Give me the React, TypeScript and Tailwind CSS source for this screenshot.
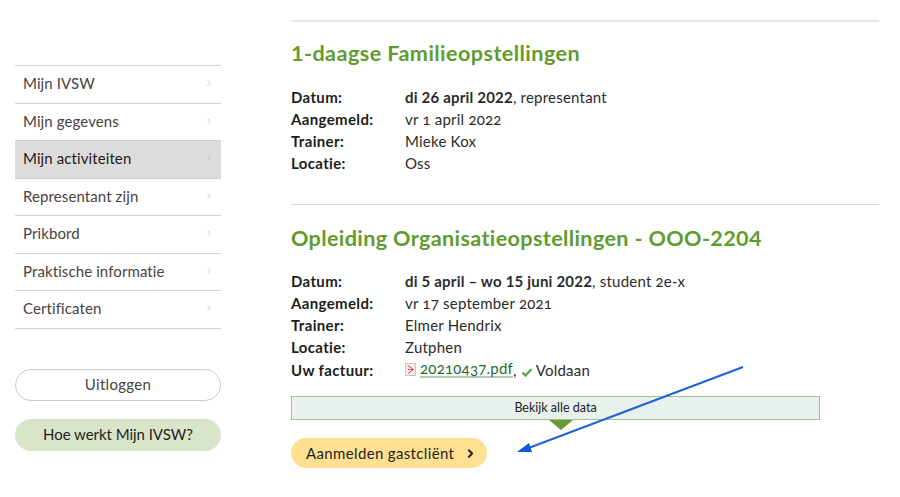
import React from 'react'
import { ChevronRight } from 'lucide-react'

const menu = ['Mijn IVSW', 'Mijn gegevens', 'Mijn activiteiten', 'Representant zijn', 'Prikbord', 'Praktische informatie', 'Certificaten']

function Row({ label, children }: { label: string; children: React.ReactNode }) {
  return (
    <div className="grid grid-cols-[114px_1fr] h-[22.3px] items-center">
      <span className="font-bold text-[#1d1d1b] tracking-[0.35px]">{label}</span>
      <span className="text-[#2b2b2b] [font-variant-numeric:oldstyle-nums]">{children}</span>
    </div>
  )
}

export default function App() {
  return (
    <div className="relative flex w-[900px] h-[497px] overflow-hidden bg-white font-['Lato',sans-serif] text-[15px] tracking-[0.22px]">
      {/* zijmenu */}
      <aside className="w-[206px] ml-[15px] mt-[65px] shrink-0 tracking-[0.1px]">
        <ul className="border-t border-[#d2d0d0]">
          {menu.map(item => (
            <li
              key={item}
              className={`flex items-center justify-between h-[37.5px] pl-2 pr-[7px] pb-[2px] border-b border-[#d2d0d0] ${item === 'Mijn activiteiten' ? 'bg-[#dcdcdc] text-[#1f1a1a] border-[#cfcfcf]' : 'text-[#4a4240]'}`}
            >
              <span>{item}</span>
              <ChevronRight size={10} strokeWidth={1.5} className="text-[#b0aeae]" />
            </li>
          ))}
        </ul>
        <div className="mt-10 h-[32px] flex items-center justify-center rounded-full border border-[#cfcbcb] text-[#4a4240] tracking-[0.3px]">Uitloggen</div>
        <div className="mt-[18px] h-[32px] flex items-center justify-center rounded-full bg-[#d8e5c9] text-[#1f1f1f] tracking-[-0.05px]">Hoe werkt Mijn IVSW?</div>
      </aside>

      {/* inhoud */}
      <main className="w-[588px] ml-[70px] pt-5 shrink-0">
        <section className="border-t-2 border-[#e6e6e6] h-[184px]">
          <h2 className="mt-[17px] h-[28px] leading-[28px] text-[21.6px] tracking-[0.43px] font-bold text-[#5f9c2f]">1-daagse Familieopstellingen</h2>
          <div className="mt-[18.5px]">
            <Row label="Datum:"><b className="font-bold tracking-[0.2px] [font-variant-numeric:lining-nums]">di 26 april 2022</b>, representant</Row>
            <Row label="Aangemeld:">vr 1 april 2022</Row>
            <Row label="Trainer:">Mieke Kox</Row>
            <Row label="Locatie:">Oss</Row>
          </div>
        </section>

        <section className="border-t border-[#d9d9d9]">
          <h2 className="mt-[19px] h-[28px] leading-[28px] text-[21.6px] tracking-[0.36px] font-bold text-[#5f9c2f]">Opleiding Organisatieopstellingen - OOO-2204</h2>
          <div className="mt-[17.5px]">
            <Row label="Datum:"><b className="font-bold tracking-[0.2px] [font-variant-numeric:lining-nums]">di 5 april – wo 15 juni 2022</b>, student 2e-x</Row>
            <Row label="Aangemeld:">vr 17 september 2021</Row>
            <Row label="Trainer:">Elmer Hendrix</Row>
            <Row label="Locatie:">Zutphen</Row>
            <Row label="Uw factuur:">
              <span className="inline-flex items-center">
                <svg width="11" height="13" viewBox="0 0 11 13" className="mr-[4px]">
                  <rect x="0.5" y="0.5" width="10" height="12" fill="#f3efef" stroke="#c9c4c4" />
                  <path d="M3 2.5 L8.5 6.5 L3 10.5 M3 6.5 H8.5" fill="none" stroke="#e0403a" strokeWidth="1" />
                </svg>
                <a className="text-[#1d6b33] border-b-2 border-[#b5c9b5] leading-[15px]">20210437.pdf</a>,
                <svg width="12" height="10" viewBox="0 0 12 10" className="ml-[4px] mr-[3px] mt-1">
                  <path d="M1.5 5.5 L4.5 8.5 L10.5 2" fill="none" stroke="#5aa84f" strokeWidth="2.4" />
                </svg>
                Voldaan
              </span>
            </Row>
          </div>
        </section>

        <div className="relative mt-[15.5px] w-[529px] h-[24px] flex items-center justify-center bg-[#e9f1ec] border border-[#a6c095] text-[12.5px] tracking-normal text-[#222]">
          Bekijk alle data
          <span className="absolute left-[257px] top-[23px] w-0 h-0 border-x-[12px] border-x-transparent border-t-[10px] border-t-[#6a9a32]" />
        </div>

        <div className="mt-[18px] w-[196px] h-[30px] flex items-center pl-[15px] gap-[10px] rounded-full bg-[#ffe092] text-[#1f1f1f] tracking-[0.35px]">
          Aanmelden gastcliënt
          <ChevronRight size={13} strokeWidth={3.5} />
        </div>
      </main>

      {/* pijl over de inhoud */}
      <svg className="absolute left-0 top-0 pointer-events-none" width="900" height="497" viewBox="0 0 900 497">
        <line x1="743" y1="367" x2="526" y2="449" stroke="#1c62d8" strokeWidth="2" />
        <path d="M517 452 L529 443 L532 452 Z" fill="#1158d8" />
      </svg>
    </div>
  )
}
